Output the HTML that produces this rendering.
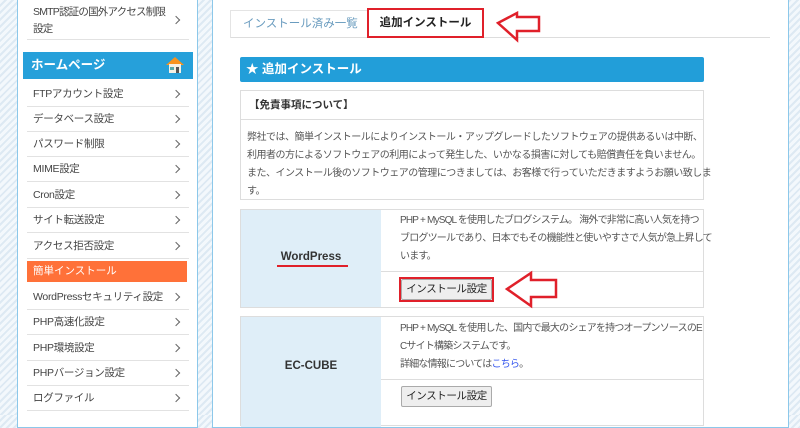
<!DOCTYPE html>
<html><head><meta charset="utf-8"><style>
*{margin:0;padding:0;box-sizing:border-box}
body{width:800px;height:415px;overflow:hidden;position:relative;font-family:"Liberation Sans","Noto Sans CJK JP",sans-serif;background:repeating-linear-gradient(135deg,#f3f8fc 0 3px,#dde9f3 3px 5px)}
.abs{position:absolute}
.side{left:17px;top:-2px;width:181px;height:430px;background:#fff;border:1px solid #8cc8ea}
.main{left:212px;top:-2px;width:577px;height:430px;background:#fff;border:1px solid #8cc8ea}
.it{position:absolute;left:27px;width:162px;font-size:10.5px;color:#444;border-bottom:1px solid #e2e2e2;padding-left:6px;white-space:nowrap;letter-spacing:-0.3px}
.it:after{content:"";position:absolute;right:10px;top:50%;width:5px;height:5px;border-right:1.5px solid #666;border-top:1.5px solid #666;transform:translate(0,-50%) rotate(45deg)}
.t{font-size:10px;color:#555;line-height:18px;white-space:nowrap}
.btn{position:absolute;font-size:10.5px;color:#222;background:#eee;border:1px solid #aaa;border-radius:2px;width:91px;height:21px;line-height:19px;text-align:center;white-space:nowrap;letter-spacing:-0.4px}
</style></head><body>
<div class="abs side"></div>
<div class="abs main"></div>
<div class="it" style="top:0;height:40px;line-height:17px;padding-top:4px;letter-spacing:-0.8px">SMTP認証の国外アクセス制限<br>設定</div>
<div class="abs" style="left:23px;top:52px;width:170px;height:27px;background:#26a0da;color:#fff;font-weight:bold;font-size:12.5px;line-height:27px;padding-left:8px">ホームページ
<svg style="position:absolute;right:8px;top:4px" width="20" height="18" viewBox="0 0 20 18"><path d="M1 9 L10 1 L19 9 Z" fill="#f7931e"/><rect x="4" y="8" width="12" height="9" fill="#f4f0e4"/><rect x="11" y="11" width="3" height="6" fill="#555"/><rect x="5" y="11" width="4" height="3" fill="#5aa"/></svg></div>
<div class="it" style="top:82px;height:25px;line-height:25px">FTPアカウント設定</div>
<div class="it" style="top:107px;height:25px;line-height:25px">データベース設定</div>
<div class="it" style="top:132px;height:25px;line-height:25px">パスワード制限</div>
<div class="it" style="top:157px;height:25px;line-height:25px">MIME設定</div>
<div class="it" style="top:182px;height:26px;line-height:26px">Cron設定</div>
<div class="it" style="top:208px;height:25px;line-height:25px">サイト転送設定</div>
<div class="it" style="top:233px;height:26px;line-height:26px">アクセス拒否設定</div>
<div class="abs" style="left:27px;top:261px;width:160px;height:21px;background:#ff7139;color:#fff;font-size:10.5px;line-height:21px;padding-left:6px">簡単インストール</div>
<div class="it" style="top:284px;height:26px;line-height:26px">WordPressセキュリティ設定</div>
<div class="it" style="top:310px;height:25px;line-height:25px">PHP高速化設定</div>
<div class="it" style="top:335px;height:26px;line-height:26px">PHP環境設定</div>
<div class="it" style="top:361px;height:25px;line-height:25px">PHPバージョン設定</div>
<div class="it" style="top:386px;height:25px;line-height:25px">ログファイル</div>

<div class="abs" style="left:230px;top:10px;width:540px;height:28px;border-bottom:1px solid #ddd"></div>
<div class="abs" style="left:230px;top:10px;width:138px;height:28px;border:1px solid #e4e4e4;border-bottom:none;font-size:11.5px;color:#6a9cbf;line-height:26px;padding-left:12px">インストール済み一覧</div>
<div class="abs" style="left:367px;top:8px;width:117px;height:30px;border:2px solid #e0202a;background:#fff;font-size:11.5px;font-weight:bold;color:#222;line-height:26px;text-align:center">追加インストール</div>
<svg class="abs" style="left:496px;top:11px" width="48" height="32"><path d="M2 12 L21 2 L21 6 L43 6 L43 20 L21 20 L21 29 Z" fill="#fff" stroke="#e0202a" stroke-width="2.5" stroke-linejoin="miter"/></svg>

<div class="abs" style="left:240px;top:57px;width:464px;height:25px;background:#229ed9;border-radius:2px;color:#fff;font-weight:bold;font-size:12.5px;line-height:25px;padding-left:6px">★ 追加インストール</div>
<div class="abs" style="left:240px;top:90px;width:464px;height:110px;border:1px solid #ddd"></div>
<div class="abs" style="left:241px;top:91px;width:462px;height:29px;border-bottom:1px solid #ddd;font-size:10.5px;font-weight:bold;color:#333;line-height:28px;padding-left:8px">【免責事項について】</div>
<div class="abs t" style="left:247px;top:129px;letter-spacing:-0.5px">弊社では、簡単インストールによりインストール・アップグレードしたソフトウェアの提供あるいは中断、<br>利用者の方によるソフトウェアの利用によって発生した、いかなる損害に対しても賠償責任を負いません。<br>また、インストール後のソフトウェアの管理につきましては、お客様で行っていただきますようお願い致しま<br>す。</div>

<div class="abs" style="left:240px;top:209px;width:464px;height:99px;border:1px solid #ddd;background:#fff"></div>
<div class="abs" style="left:241px;top:210px;width:140px;height:97px;background:#dfeef8"></div>
<div class="abs" style="left:381px;top:271px;width:322px;height:1px;background:#ddd"></div>
<div class="abs" style="left:241px;top:251px;width:140px;text-align:center;font-size:11.5px;font-weight:bold;color:#333">WordPress</div>
<div class="abs" style="left:277px;top:265px;width:71px;height:2px;background:#e0202a"></div>
<div class="abs t" style="left:400px;top:212px;letter-spacing:-0.8px">PHP + MySQL を使用したブログシステム。 海外で非常に高い人気を持つ<br>ブログツールであり、日本でもその機能性と使いやすさで人気が急上昇して<br>います。</div>
<div class="abs" style="left:399px;top:277px;width:95px;height:25px;border:2px solid #e0202a"></div>
<div class="btn" style="left:401px;top:279px">インストール設定</div>
<svg class="abs" style="left:504px;top:270px" width="56" height="40"><path d="M3 19 L27 3 L27 10 L52 10 L52 27 L27 27 L27 36 Z" fill="#fff" stroke="#e0202a" stroke-width="2.5"/></svg>

<div class="abs" style="left:240px;top:316px;width:464px;height:110px;border:1px solid #ddd;background:#fff"></div>
<div class="abs" style="left:241px;top:317px;width:140px;height:110px;background:#dfeef8"></div>
<div class="abs" style="left:381px;top:379px;width:322px;height:1px;background:#ddd"></div>
<div class="abs" style="left:241px;top:360px;width:140px;text-align:center;font-size:11.5px;font-weight:bold;color:#333">EC-CUBE</div>
<div class="abs t" style="left:400px;top:320px;letter-spacing:-0.8px">PHP + MySQL を使用した、国内で最大のシェアを持つオープンソースのE<br>Cサイト構築システムです。<br>詳細な情報については<span style="color:#3355ee">こちら</span>。</div>
<div class="btn" style="left:401px;top:386px">インストール設定</div>
</body></html>
